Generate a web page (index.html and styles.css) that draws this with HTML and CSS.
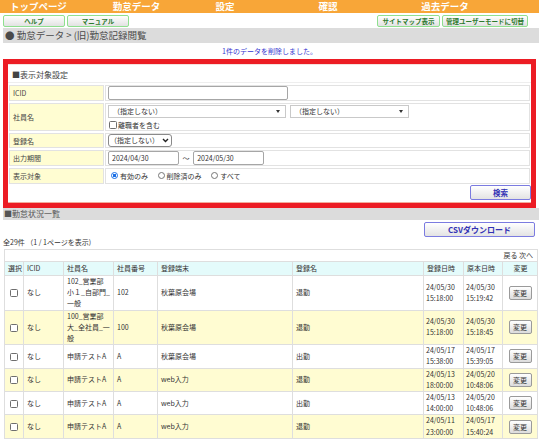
FILE: index.html
```html
<!DOCTYPE html>
<html lang="ja">
<head>
    <meta charset="UTF-8">
    <meta name="viewport" content="width=device-width, initial-scale=1.0">
    <title>(旧)勤怠記録閲覧</title>
    <link rel="stylesheet" href="styles.css">
</head>
<body>
    <div class="menu">
        <span class="menu__item">トップページ</span>
        <span class="menu__item">勤怠データ</span>
        <span class="menu__item">設定</span>
        <span class="menu__item">確認</span>
        <span class="menu__item">過去データ</span>
    </div>
    <div class="page">
        <div class="tools">
            <div class="tools__group">
                <button type="button" class="greenButton w62">ヘルプ</button>
                <button type="button" class="greenButton w62">マニュアル</button>
            </div>
            <div class="tools__group">
                <button type="button" class="greenButton w63">サイトマップ表示</button>
                <button type="button" class="greenButton w86">管理ユーザーモードに切替</button>
            </div>
        </div>
        <div class="crumb">● 勤怠データ &gt; (旧)勤怠記録閲覧</div>
        <p class="message">1件のデータを削除しました。</p>

        <div class="search">
            <div class="search__title">■表示対象設定</div>
            <table class="form">
                <colgroup><col class="form__label"><col></colgroup>
                <tr class="row16">
                    <th>ICID</th>
                    <td><input type="text" class="text icid"></td>
                </tr>
                <tr class="row28">
                    <th>社員名</th>
                    <td>
                        <div class="form__line">
                            <span class="pick pick--wide"><select><option>（指定しない）</option></select></span>
                            <span class="pick pick--mid"><select><option>（指定しない）</option></select></span>
                        </div>
                        <label class="check"><input type="checkbox" class="box">離職者を含む</label>
                    </td>
                </tr>
                <tr class="row15">
                    <th>登録名</th>
                    <td>
                        <span class="native">
                            <select><option>（指定しない）</option></select>
                            <svg class="native__arrow" width="7" height="5" viewBox="0 0 7 5"><path d="M1 1 L3.5 3.5 L6 1" fill="none" stroke="#222" stroke-width="1.4"/></svg>
                        </span>
                    </td>
                </tr>
                <tr class="row16">
                    <th>出力期間</th>
                    <td>
                        <input type="text" class="text date" value="2024/04/30">
                        <span class="tilde">～</span>
                        <input type="text" class="text date" value="2024/05/30">
                    </td>
                </tr>
                <tr class="row16">
                    <th>表示対象</th>
                    <td>
                        <label class="radio"><input type="radio" name="target" checked>有効のみ</label>
                        <label class="radio"><input type="radio" name="target">削除済のみ</label>
                        <label class="radio"><input type="radio" name="target">すべて</label>
                    </td>
                </tr>
            </table>
            <div class="search__foot">
                <button type="button" class="blueButton searchButton">検索</button>
            </div>
        </div>

        <div class="bar">■勤怠状況一覧</div>
        <div class="csv">
            <button type="button" class="blueButton csvButton">CSVダウンロード</button>
        </div>
        <div class="count">全29件 （1 / 1ページを表示)</div>

        <table class="list">
            <colgroup>
                <col style="width:19px">
                <col style="width:40px">
                <col style="width:50px">
                <col style="width:44px">
                <col style="width:135px">
                <col style="width:131px">
                <col style="width:40px">
                <col style="width:39px">
                <col style="width:35px">
            </colgroup>
            <tr class="list__pager">
                <td colspan="9">戻る 次へ</td>
            </tr>
            <tr class="list__head">
                <th>選択</th>
                <th>ICID</th>
                <th>社員名</th>
                <th>社員番号</th>
                <th>登録端末</th>
                <th>登録名</th>
                <th>登録日時</th>
                <th>原本日時</th>
                <th class="center">変更</th>
            </tr>
            <tbody id="rows"></tbody>
        </table>
    </div>

    <script>
        let records = [
            ['なし', '102_営業部<br>小１_自部門_<br>一般', '102', '秋葉原会場', '退勤', '24/05/30', '15:18:00', '24/05/30', '15:19:42'],
            ['なし', '100_営業部<br>大_全社員_一<br>般', '100', '秋葉原会場', '退勤', '24/05/30', '15:18:00', '24/05/30', '15:18:45'],
            ['なし', '申請テストA', 'A', '秋葉原会場', '出勤', '24/05/17', '15:38:00', '24/05/17', '15:39:05'],
            ['なし', '申請テストA', 'A', 'web入力', '退勤', '24/05/13', '18:00:00', '24/05/20', '10:48:06'],
            ['なし', '申請テストA', 'A', 'web入力', '出勤', '24/05/13', '14:00:00', '24/05/20', '10:48:06'],
            ['なし', '申請テストA', 'A', 'web入力', '退勤', '24/05/11', '23:00:00', '24/05/17', '15:40:24']
        ];

        for (let item of records)
        {
            let tr = document.createElement('tr');
            tr.innerHTML = `<td class="center"><input type="checkbox" class="box"></td>
                <td>${item[0]}</td>
                <td>${item[1]}</td>
                <td>${item[2]}</td>
                <td>${item[3]}</td>
                <td>${item[4]}</td>
                <td class="time">${item[5]}<br>${item[6]}</td>
                <td class="time">${item[7]}<br>${item[8]}</td>
                <td class="center"><button type="button" class="editButton">変更</button></td>`;
            rows.append(tr);
        }
    </script>
</body>
</html>
```

FILE: styles.css
```css
* {
    box-sizing: border-box;
    margin: 0px;
    padding: 0px;
}
body {
    font-family: "Noto Sans CJK JP", "Liberation Sans", sans-serif;
    font-size: 7px;
    color: #333;
    background-color: #fff;
    overflow: hidden;
}
button, input, select {
    font-family: inherit;
    font-size: 7px;
    color: #333;
}
.menu {
    height: 13px;
    background-color: #f8a638;
    display: flex;
    padding-left: 10px;
}
.menu__item {
    flex: none;
    width: 102.8px;
    color: #fff;
    font-weight: bold;
    font-size: 9.5px;
    line-height: 13px;
}
.page {
    padding-left: 3px;
}
.tools {
    display: flex;
    justify-content: space-between;
    padding: 2px 11px 1px 0px;
}
.tools__group {
    display: flex;
    gap: 2px;
}
.greenButton {
    height: 12px;
    border: 1px solid #8fe08f;
    border-radius: 2px;
    background: linear-gradient(#fff, #e2e2e2);
    color: #2d7a2d;
    font-weight: bold;
    font-size: 6.5px;
    line-height: 10px;
}
.w62 { width: 62px; }
.w63 { width: 63px; }
.w86 { width: 86px; }
.crumb {
    height: 15px;
    background-color: #dcdcdc;
    color: #4a4a4a;
    font-size: 9.5px;
    line-height: 15px;
    padding-left: 2px;
}
.message {
    height: 16px;
    line-height: 16px;
    text-align: center;
    color: #3535d0;
    padding-right: 3px;
}
.search {
    margin-right: 3px;
    border: 5px solid #ec1c24;
}
.search__title {
    height: 19px;
    line-height: 19px;
    padding-left: 4px;
    font-size: 8px;
    color: #444;
    border-top: 1px solid #f6e0dc;
    border-bottom: 1px solid #eee;
}
.form {
    width: 100%;
    border-collapse: separate;
    border-spacing: 1px 2px;
    table-layout: fixed;
}
.form__label {
    width: 95px;
}
.form th {
    background-color: #fffdd2;
    border: 1px solid #e2e2e2;
    font-weight: normal;
    text-align: left;
    padding-left: 3px;
    color: #444;
}
.form td {
    border: 1px solid #e2e2e2;
    padding: 0px 2px;
    vertical-align: middle;
}
.row16 { height: 16px; }
.row15 { height: 15px; }
.row28 { height: 28px; }
.row28 td {
    vertical-align: top;
    padding-top: 1px;
}
.text {
    height: 14px;
    border: 1px solid #a6a6a6;
    border-radius: 2px;
    padding: 0px 3px;
    vertical-align: middle;
    outline: none;
}
.icid {
    width: 180px;
}
.date {
    width: 71px;
}
.tilde {
    display: inline-block;
    width: 11px;
    text-align: center;
    vertical-align: middle;
}
.form__line {
    display: flex;
    gap: 4px;
}
.pick {
    position: relative;
    display: block;
}
.pick select {
    appearance: none;
    width: 100%;
    height: 13px;
    border: 1px solid #c9c9c9;
    border-radius: 0px;
    background: #fff;
    padding-left: 4px;
    line-height: 11px;
}
.pick::after {
    content: "";
    position: absolute;
    top: 5px;
    right: 6px;
    border-left: 2px solid transparent;
    border-right: 2px solid transparent;
    border-top: 3px solid #333;
}
.pick--wide { width: 178px; }
.pick--mid { width: 119px; }
.native {
    position: relative;
    display: inline-block;
    vertical-align: middle;
}
.native select {
    appearance: none;
    width: 64px;
    height: 13px;
    border: 1px solid #8a8a8a;
    border-radius: 3px;
    background: #fff;
    padding-left: 1px;
    line-height: 11px;
}
.native__arrow {
    position: absolute;
    top: 4px;
    right: 3px;
}
.check {
    display: flex;
    align-items: center;
    height: 11px;
    margin-top: 1px;
}
.box {
    appearance: none;
    width: 8px;
    height: 8px;
    border: 1px solid #6e6e6e;
    border-radius: 1.5px;
    background: #fff;
    margin: 0px 1px 0px 1px;
    vertical-align: middle;
}
.radio {
    display: inline-flex;
    align-items: center;
    margin-right: 5px;
}
.radio input {
    appearance: none;
    width: 7px;
    height: 7px;
    border: 1px solid #767676;
    border-radius: 50%;
    background: #fff;
    margin: 0px 2px 0px 3px;
}
.radio input:checked {
    border-color: #1a6fe6;
    background: radial-gradient(circle, #1a6fe6 0 1.6px, #fff 1.9px);
}
.search__foot {
    text-align: right;
    margin-top: -1px;
    padding: 0px 0px 2px 0px;
    border-bottom: 1px solid #f2ad9d;
}
.blueButton {
    height: 15px;
    border: 1px solid #7b7be0;
    border-radius: 2px;
    background: linear-gradient(#fff, #e3e3e3);
    color: #3232b4;
    font-weight: bold;
    font-size: 7.5px;
    line-height: 13px;
}
.searchButton {
    width: 61px;
}
.bar {
    height: 12px;
    line-height: 12px;
    background-color: #dcdcdc;
    color: #555;
    font-size: 8px;
    padding-left: 1px;
}
.csv {
    text-align: right;
    padding: 2px 4px 0px 0px;
    height: 17px;
}
.csvButton {
    width: 111px;
    font-size: 8px;
}
.count {
    height: 12px;
    line-height: 8px;
    padding-top: 1px;
}
.list {
    margin-left: 1px;
    width: 533px;
    table-layout: fixed;
    border-collapse: collapse;
}
.list td, .list th {
    border: 1px solid #dedede;
    padding: 0px 3px;
    line-height: 11.2px;
    vertical-align: middle;
    text-align: left;
    font-weight: normal;
}
.list__pager td {
    text-align: right;
    line-height: 11px;
    padding-right: 4px;
    background: #fff;
}
.list__head th {
    background-color: #e4fbfb;
    line-height: 13px;
    white-space: nowrap;
    padding: 0px 2px 0px 3px;
}
.list .center {
    text-align: center;
}
#rows tr:nth-child(even) td {
    background-color: #fffcd2;
}
.list .time {
    padding-left: 2px;
    padding-right: 0px;
    white-space: nowrap;
}
.editButton {
    width: 23px;
    height: 14px;
    border: 1px solid #9a9a9a;
    border-radius: 2px;
    background: linear-gradient(#fff, #dcdcdc);
    line-height: 12px;
    vertical-align: middle;
}
```
